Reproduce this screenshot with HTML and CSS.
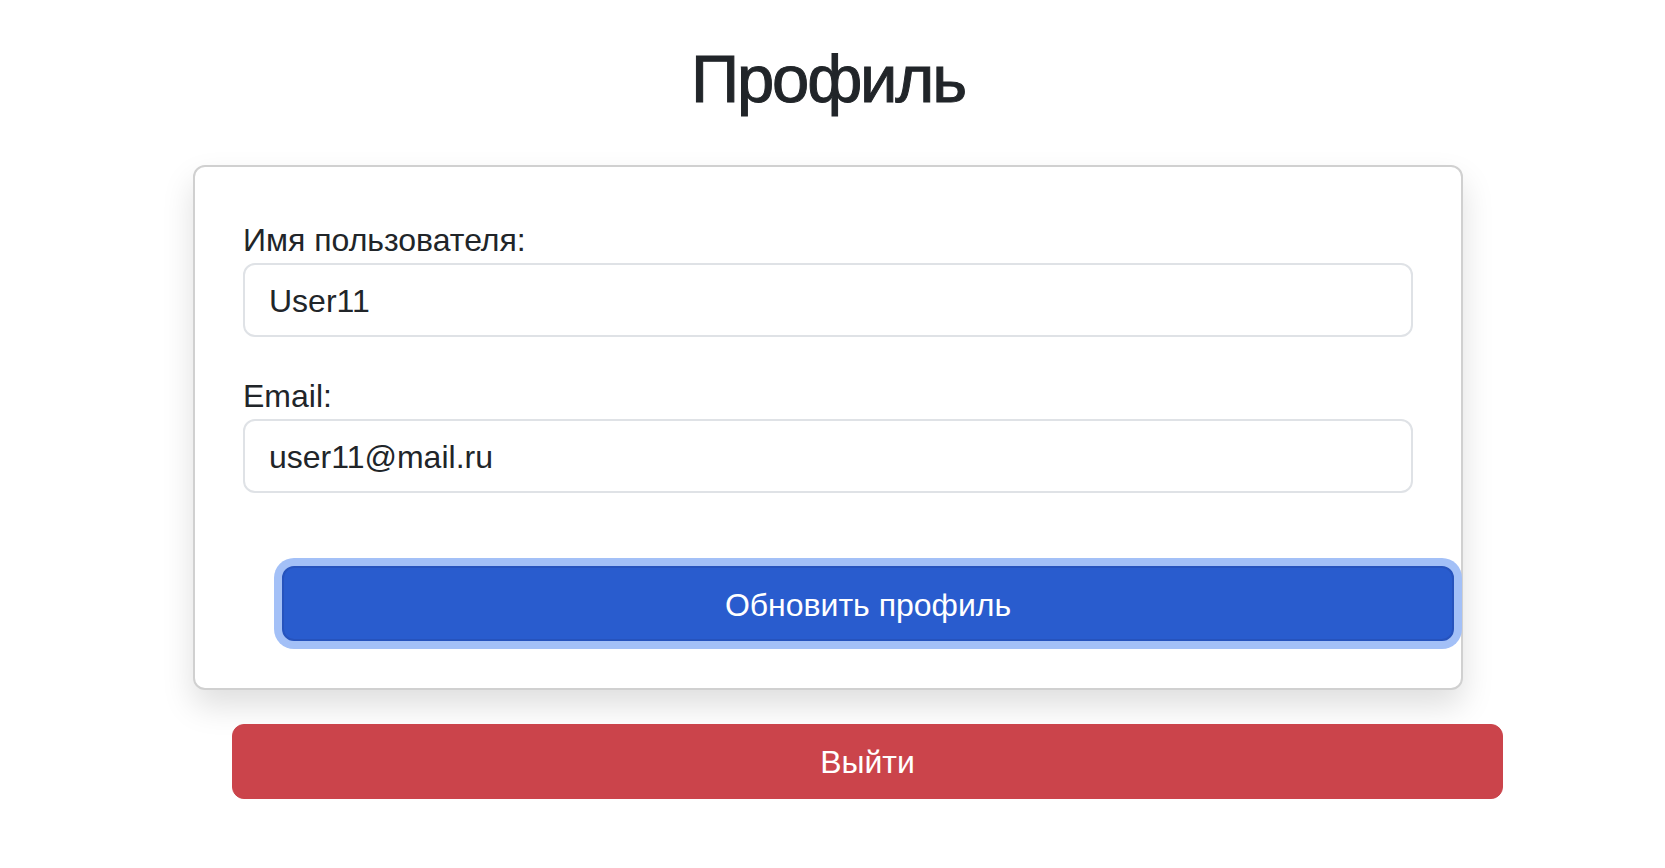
FILE: index.html
```html
<!DOCTYPE html>
<html lang="ru">
<head>
<meta charset="utf-8">
<title>Профиль</title>
<link rel="stylesheet" href="styles.css">
</head>
<body>
<div class="page">
  <h1 class="title">Профиль</h1>
  <div class="card">
    <form class="profile-form">
      <div class="field">
        <label class="field-label" for="username">Имя пользователя:</label>
        <input class="field-input" id="username" type="text" value="User11">
      </div>
      <div class="field field-next">
        <label class="field-label" for="email">Email:</label>
        <input class="field-input" id="email" type="email" value="user11@mail.ru">
      </div>
      <button class="btn btn-primary btn-focus" type="button">Обновить профиль</button>
    </form>
  </div>
  <button class="btn btn-danger btn-logout" type="button">Выйти</button>
</div>
</body>
</html>
```
FILE: styles.css
```css
* {
  box-sizing: border-box;
}

html, body {
  margin: 0;
  padding: 0;
  background: #ffffff;
}

body {
  font-family: "Liberation Sans", Arial, sans-serif;
  font-size: 32px;
  line-height: 48px;
  color: #212529;
}

.page {
  width: 1270px;
  margin-left: 193px;
}

.title {
  margin: 37px 0 0 0;
  font-family: "Liberation Sans", Arial, sans-serif;
  font-size: 67px;
  line-height: 83px;
  font-weight: 400;
  letter-spacing: -2.2px;
  -webkit-text-stroke: 1px #212529;
  text-align: center;
  color: #212529;
}

.card {
  margin-top: 45px;
  border: 2px solid #d0d0d0;
  border-radius: 12px;
  background: #ffffff;
  padding: 48px 48px 47px 48px;
  box-shadow: 0 16px 32px rgba(0, 0, 0, 0.13);
}

.profile-form {
  display: flex;
  flex-direction: column;
  margin: 0;
}

.field {
  display: flex;
  flex-direction: column;
}

.field-next {
  margin-top: 34px;
}

.field-label {
  display: block;
  font-size: 32px;
  line-height: 48px;
  padding-top: 1px;
  margin-bottom: -1px;
}

.field-input {
  display: block;
  width: 100%;
  height: 74px;
  padding: 13px 24px 11px 24px;
  font-family: "Liberation Sans", Arial, sans-serif;
  font-size: 32px;
  line-height: 48px;
  color: #212529;
  background: #ffffff;
  border: 2px solid #dfe2e6;
  border-radius: 12px;
  outline: none;
}

.btn {
  display: block;
  height: 75px;
  padding: 13px 24px 11px 24px;
  font-family: "Liberation Sans", Arial, sans-serif;
  font-size: 32px;
  line-height: 49px;
  text-align: center;
  color: #ffffff;
  border-radius: 12px;
  cursor: pointer;
}

.btn-primary {
  margin-top: 73px;
  margin-left: 39px;
  width: calc(100% + 2px);
  background: #295cce;
  border: 2px solid #2653bd;
}

.btn-focus {
  box-shadow: 0 0 0 8px #a3c0f7;
}

.btn-danger {
  background: #cb444b;
  border: 1px solid #cb444b;
}

.btn-logout {
  margin-top: 34px;
  margin-left: 39px;
  width: calc(100% + 1px);
}
```
